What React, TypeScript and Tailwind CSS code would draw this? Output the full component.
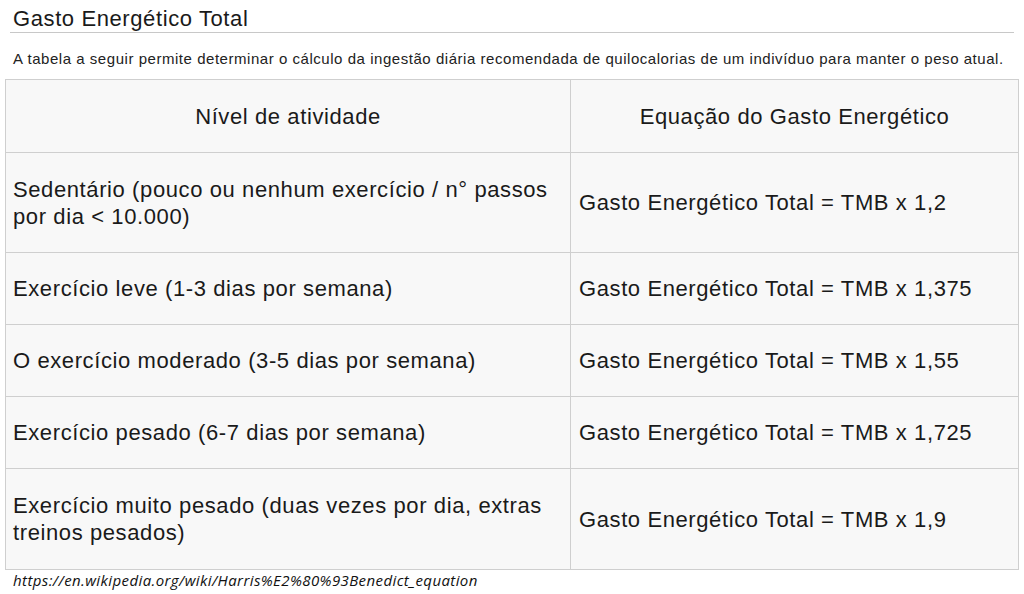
import React from 'react';

const rows = [
  { level: 'Sedentário (pouco ou nenhum exercício / n° passos por dia < 10.000)', factor: '1,2', h: 'h-[100px]' },
  { level: 'Exercício leve (1-3 dias por semana)', factor: '1,375', h: 'h-[72px]' },
  { level: 'O exercício moderado (3-5 dias por semana)', factor: '1,55', h: 'h-[72px]' },
  { level: 'Exercício pesado (6-7 dias por semana)', factor: '1,725', h: 'h-[72px]' },
  { level: 'Exercício muito pesado (duas vezes por dia, extras treinos pesados)', factor: '1,9', h: 'h-[100px]' },
];

export default function App() {
  return (
    <div className="w-[1024px] h-[594px] bg-white text-[#1a1a1a] font-['Liberation_Sans',Arial,sans-serif] overflow-hidden">
      {/* Heading */}
      <div className="mx-[10px] pt-[6px] border-b border-[#c8c8c8]">
        <h1 className="pl-[3px] text-[22px] leading-[26px] tracking-[0.6px]">Gasto Energético Total</h1>
      </div>

      <p className="px-[13px] pt-[16px] text-[15px] leading-[20px] tracking-[0.54px] text-[#222] whitespace-nowrap">
        A tabela a seguir permite determinar o cálculo da ingestão diária recomendada de quilocalorias de um indivíduo para manter o peso atual.
      </p>

      {/* Table */}
      <div className="mx-[5px] mt-[10px] w-[1014px] border border-[#cfcfcf] bg-[#f8f8f8] text-[22px] leading-[27px] tracking-[0.6px]">
        <div className="flex h-[73px] border-b border-[#cfcfcf]">
          <div className="w-[565px] border-r border-[#cfcfcf] flex items-center justify-center">Nível de atividade</div>
          <div className="flex-1 flex items-center justify-center">Equação do Gasto Energético</div>
        </div>
        {rows.map((r, i) => (
          <div key={i} className={`flex ${r.h} ${i < rows.length - 1 ? 'border-b border-[#cfcfcf]' : ''}`}>
            <div className="w-[565px] border-r border-[#cfcfcf] flex items-center pl-[7px] pr-[12px]">{r.level}</div>
            <div className="flex-1 flex items-center pl-[8px]">Gasto Energético Total = TMB x {r.factor}</div>
          </div>
        ))}
      </div>

      <div className="pl-[13px] pt-[1px] italic text-[15px] leading-[18px] tracking-[0.4px] text-[#111] font-['Open_Sans',sans-serif]">
        https://en.wikipedia.org/wiki/Harris%E2%80%93Benedict_equation
      </div>
    </div>
  );
}
